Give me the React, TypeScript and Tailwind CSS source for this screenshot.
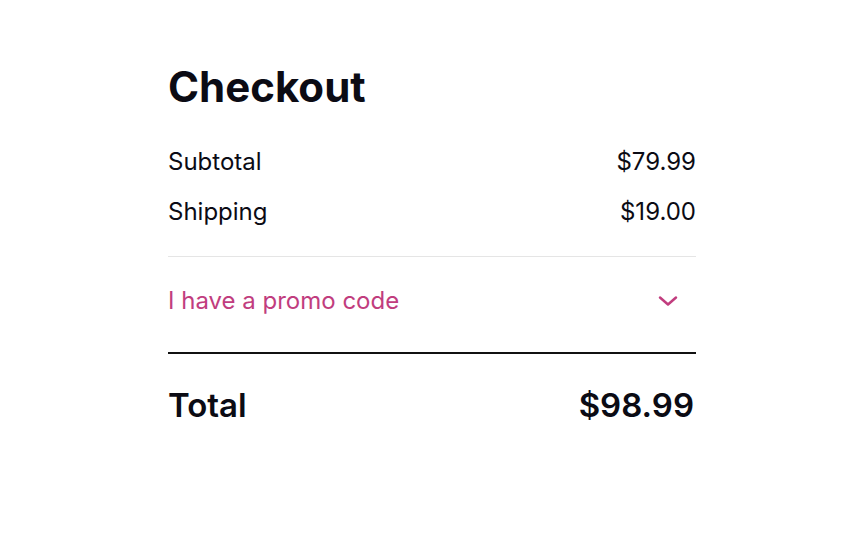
import React from "react";

export default function App() {
  return (
    <div className="min-h-[540px] w-full bg-white" style={{ fontFamily: "Inter, 'Noto Sans', sans-serif" }}>
      <div className="mx-auto w-[528px] pt-[62px]">
        <h1 className="text-[42px] font-bold leading-[50px] text-[#0b0b14]">Checkout</h1>
        <div className="mt-[25px] text-[24px] text-[#0b0b14]">
          <div className="flex h-[50px] items-center justify-between">
            <span>Subtotal</span>
            <span>$79.99</span>
          </div>
          <div className="flex h-[50px] items-center justify-between">
            <span>Shipping</span>
            <span>$19.00</span>
          </div>
        </div>
        <div className="mt-[19px] border-t border-[#e5e5e5]" />
        <div className="flex items-center justify-between pt-[29px] pb-[36px]">
          <span className="text-[24px] leading-[30px] text-[#c13d7e]">I have a promo code</span>
          <svg width="20" height="12" viewBox="0 0 20 12" className="mr-[18px]" fill="none">
            <path d="M2 2.5 L10 9.5 L18 2.5" stroke="#c13d7e" strokeWidth="2.5" strokeLinecap="round" strokeLinejoin="round" />
          </svg>
        </div>
        <div className="h-[2px] bg-[#111111]" />
        <div className="mt-[32px] flex h-[40px] items-center justify-between text-[33px] font-semibold text-[#0b0b14]">
          <span>Total</span>
          <span className="mr-[2px]">$98.99</span>
        </div>
      </div>
    </div>
  );
}
